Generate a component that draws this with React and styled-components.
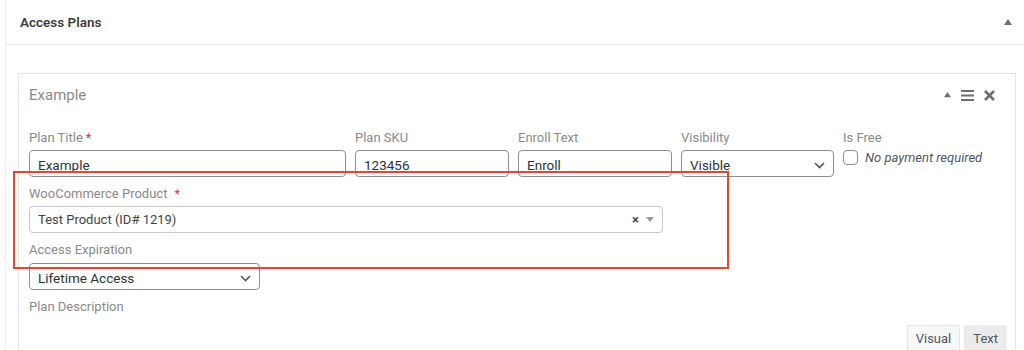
import React from "react";
import styled, { createGlobalStyle } from "styled-components";

const Global = createGlobalStyle`
  body {
    margin: 0;
    background: #fff;
    font-family: "Roboto", "Liberation Sans", sans-serif;
    color: #3c434a;
  }
`;

const Page = styled.div`
  position: relative;
  width: 1024px;
  height: 350px;
  overflow: hidden;
`;

const Postbox = styled.section`
  margin-left: 5px;
  border-left: 1px solid #f0f0f1;
  height: 100%;
`;

const PostboxHeader = styled.header`
  display: flex;
  align-items: center;
  justify-content: space-between;
  height: 44px;
  padding: 0 12px 0 14px;
  border-bottom: 1px solid #e6e6e6;
`;

const PostboxTitle = styled.h2`
  margin: 0;
  font-size: 13.5px;
  font-weight: 600;
  color: #3c3c3c;
`;

const Inside = styled.div`
  padding: 28px 8px 0 12px;
`;

const Card = styled.div`
  border: 1px solid #e4e4e4;
  border-bottom: none;
  height: 290px;
`;

const CardHeader = styled.div`
  display: flex;
  align-items: center;
  justify-content: space-between;
  height: 42px;
  padding: 0 20px 0 10px;
`;

const CardTitle = styled.h3`
  margin: 0;
  font-size: 15px;
  font-weight: 400;
  color: #8a8a8a;
`;

const Tools = styled.div`
  display: flex;
  align-items: center;
  gap: 10px;
  color: #6b6f73;
`;

const CardBody = styled.div`
  padding: 13px 10px 0 10px;
  display: flex;
  flex-direction: column;
  gap: 8px;
`;

const Row = styled.div`
  display: grid;
  grid-template-columns: 317px 154px 154px 153px 1fr;
  column-gap: 9px;
`;

const Field = styled.div`
  display: flex;
  flex-direction: column;
  width: ${(p) => p.$width || "auto"};
`;

const Label = styled.label`
  font-size: 13px;
  line-height: 18px;
  color: #8a8a8a;
  margin-bottom: ${(p) => p.$gap ?? 4}px;
`;

const Req = styled.span`
  color: #d63638;
  margin-left: ${(p) => p.$space || 3}px;
`;

const Input = styled.div`
  box-sizing: border-box;
  height: 27px;
  border: 1px solid #8c8f94;
  border-radius: 4px;
  padding: 3px 8px 0;
  display: flex;
  align-items: center;
  justify-content: space-between;
  font-size: 13.5px;
  color: #2c3338;
`;

const Select2 = styled.div`
  box-sizing: border-box;
  height: 27px;
  width: 634px;
  border: 1px solid #c8c8c8;
  border-radius: 4px;
  padding: 0 8px;
  display: flex;
  align-items: center;
  justify-content: space-between;
  font-size: 13px;
  color: #444;
`;

const Clear = styled.span`
  display: flex;
  align-items: center;
  gap: 7px;
  font-weight: 700;
  color: #444;
  font-size: 13px;
`;

const CheckRow = styled.div`
  display: flex;
  align-items: center;
  gap: 7px;
  margin-top: 0;
`;

const Box = styled.span`
  box-sizing: border-box;
  width: 15px;
  height: 15px;
  border: 1px solid #8c8f94;
  border-radius: 4px;
`;

const Italic = styled.em`
  font-size: 13px;
  color: #50575e;
`;

const Tabs = styled.div`
  display: flex;
  justify-content: flex-end;
  gap: 4px;
  margin: 5px -2px 0 0;
`;

const Tab = styled.div`
  box-sizing: border-box;
  height: 26px;
  padding: 0 8px;
  display: flex;
  align-items: center;
  font-size: 13px;
  color: #50575e;
  background: ${(p) => (p.$active ? "#f6f7f7" : "#ebebeb")};
  border: 1px solid ${(p) => (p.$active ? "#e6e6e6" : "#ebebeb")};
  border-bottom: none;
`;

const Highlight = styled.div`
  position: absolute;
  left: 13px;
  top: 171px;
  width: 716px;
  height: 98px;
  border: 2px solid #e8452f;
  box-sizing: border-box;
  pointer-events: none;
`;

const Up = ({ size = 7 }) => (
  <svg width={size} height={size * 0.75} viewBox="0 0 8 6">
    <path d="M4 0L8 6H0z" fill="#6b6f73" />
  </svg>
);

const Menu = () => (
  <svg width="13" height="11" viewBox="0 0 13 11">
    <path d="M0 1h13M0 5.5h13M0 10h13" stroke="#6b6f73" strokeWidth="2" />
  </svg>
);

const Close = () => (
  <svg width="11" height="11" viewBox="0 0 11 11">
    <path d="M1 1l9 9M10 1l-9 9" stroke="#6b6f73" strokeWidth="2.6" />
  </svg>
);

const Chevron = () => (
  <svg width="11" height="7" viewBox="0 0 11 7">
    <path d="M1 1l4.5 4.5L10 1" stroke="#50575e" strokeWidth="1.6" fill="none" />
  </svg>
);

const Caret = () => (
  <svg width="8" height="5" viewBox="0 0 8 5">
    <path d="M0 0h8L4 5z" fill="#999" />
  </svg>
);

export default function App() {
  return (
    <Page>
      <Global />
      <Postbox>
        <PostboxHeader>
          <PostboxTitle>Access Plans</PostboxTitle>
          <Up size={8} />
        </PostboxHeader>
        <Inside>
          <Card>
            <CardHeader>
              <CardTitle>Example</CardTitle>
              <Tools>
                <Up />
                <Menu />
                <Close />
              </Tools>
            </CardHeader>
            <CardBody>
              <Row>
                <Field>
                  <Label $gap={3}>
                    Plan Title<Req>*</Req>
                  </Label>
                  <Input>Example</Input>
                </Field>
                <Field>
                  <Label $gap={3}>Plan SKU</Label>
                  <Input>123456</Input>
                </Field>
                <Field>
                  <Label $gap={3}>Enroll Text</Label>
                  <Input>Enroll</Input>
                </Field>
                <Field>
                  <Label $gap={3}>Visibility</Label>
                  <Input>
                    Visible
                    <Chevron />
                  </Input>
                </Field>
                <Field>
                  <Label $gap={3}>Is Free</Label>
                  <CheckRow>
                    <Box />
                    <Italic>No payment required</Italic>
                  </CheckRow>
                </Field>
              </Row>
              <Field>
                <Label $gap={3}>
                  WooCommerce Product<Req $space={7}>*</Req>
                </Label>
                <Select2>
                  Test Product (ID# 1219)
                  <Clear>
                    ×
                    <Caret />
                  </Clear>
                </Select2>
              </Field>
              <Field $width="231px">
                <Label>Access Expiration</Label>
                <Input>
                  Lifetime Access
                  <Chevron />
                </Input>
              </Field>
              <Field>
                <Label>Plan Description</Label>
                <Tabs>
                  <Tab $active>Visual</Tab>
                  <Tab>Text</Tab>
                </Tabs>
              </Field>
            </CardBody>
          </Card>
        </Inside>
      </Postbox>
      <Highlight />
    </Page>
  );
}
